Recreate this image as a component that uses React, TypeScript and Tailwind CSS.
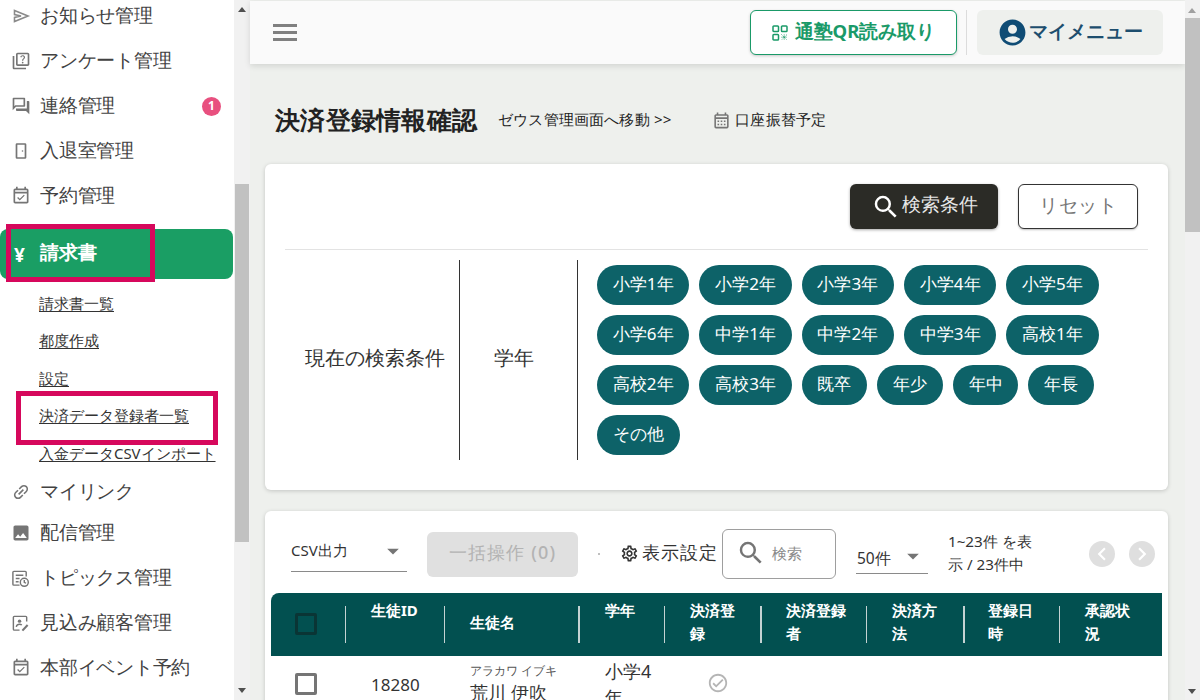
import React from "react";
import { MdOutlineQuiz, MdOutlineForum, MdOutlineEventAvailable, MdImage, MdSearch, MdAccountCircle, MdOutlineSettings, MdChevronLeft, MdChevronRight, MdOutlineCalendarMonth, MdOutlineCheckCircle, MdLink, MdArrowDropDown } from "react-icons/md";

const Send = () => (
  <svg viewBox="0 0 20 20" className="w-5 h-5" fill="none" stroke="#8a8a8a" strokeWidth="1.6">
    <path d="M3.5 4.5 L17 10 L3.5 15.5 L3.5 11.5 L10 10 L3.5 8.5 Z" />
  </svg>
);
const Door = () => (
  <svg viewBox="0 0 20 20" className="w-5 h-5" fill="none" stroke="#757575" strokeWidth="1.7">
    <rect x="5.5" y="3" width="9" height="14" rx="0.5" />
    <circle cx="11.5" cy="10" r="0.8" fill="#757575" stroke="none" />
  </svg>
);
const TopicIcon = () => (
  <svg viewBox="0 0 20 20" className="w-[19px] h-[19px]" fill="none" stroke="#757575" strokeWidth="1.5">
    <path d="M9 17 H3 a1 1 0 0 1 -1 -1 V3.5 a1 1 0 0 1 1 -1 H15 a1 1 0 0 1 1 1 V8" />
    <path d="M5 6.5 H13 M5 10 H9 M5 13.5 H8" />
    <circle cx="14" cy="14" r="4.2" />
    <path d="M14 11.5 V14 L15.8 15" />
  </svg>
);
const ProspectIcon = () => (
  <svg viewBox="0 0 20 20" className="w-[19px] h-[19px]" fill="none" stroke="#757575" strokeWidth="1.5">
    <path d="M16.5 8 V3.5 a1 1 0 0 0 -1 -1 H3.5 a1 1 0 0 0 -1 1 V16 a1 1 0 0 0 1 1 H9" />
    <circle cx="9" cy="7.5" r="1.8" fill="#757575" stroke="none" />
    <path d="M5.5 13.5 c0.5 -2 2 -2.8 3.5 -2.8 c1 0 1.8 .3 2.4 .8" />
    <path d="M12 17.5 L17.5 11.5" strokeWidth="2.2" />
  </svg>
);
const QrIcon = () => (
  <svg viewBox="0 0 16 16" className="w-4 h-4" fill="none" stroke="#1a9a68" strokeWidth="1.5">
    <rect x="1" y="1" width="5.5" height="5.5" rx="0.8" />
    <rect x="9.5" y="1" width="5.5" height="5.5" rx="0.8" />
    <rect x="1" y="9.5" width="5.5" height="5.5" rx="0.8" />
    <path d="M9.5 9.5 L15 15 M15 9.5 L9.5 15 M12.2 9.5 V15 M9.5 12.2 H15" strokeWidth="1" strokeDasharray="1 1" />
  </svg>
);

const iconBox = "w-[40px] pl-[11px] flex items-center shrink-0 text-[#757575]";

function Item({ icon, label, h = "h-[45px]", badge }: { icon: React.ReactNode; label: string; h?: string; badge?: boolean }) {
  return (
    <div className={`${h} flex items-center relative`}>
      <span className={iconBox}>{icon}</span>
      <span className="relative top-[-1px] text-[18.5px] tracking-[-0.25px] text-[#424242] whitespace-nowrap">{label}</span>
      {badge && (
        <span className="absolute left-[202px] top-[13px] w-[19px] h-[19px] rounded-full bg-[#e8507f] text-white text-[12px] font-bold flex items-center justify-center">1</span>
      )}
    </div>
  );
}

function Sub({ label }: { label: string }) {
  return (
    <div className="h-[37.5px] flex items-center pl-[39px]">
      <span className="relative top-[-1px] text-[14.9px] text-[#333] underline underline-offset-2 whitespace-nowrap">{label}</span>
    </div>
  );
}

const chips = ["小学1年", "小学2年", "小学3年", "小学4年", "小学5年", "小学6年", "中学1年", "中学2年", "中学3年", "高校1年", "高校2年", "高校3年", "既卒", "年少", "年中", "年長", "その他"];

const headers = [
  { x: 371, w: 60, y: 599, t: "生徒ID" },
  { x: 470, w: 90, y: 611, t: "生徒名" },
  { x: 605, w: 50, y: 599, t: "学年" },
  { x: 690, w: 46, y: 599, t: "決済登録" },
  { x: 786, w: 62, y: 599, t: "決済登録者" },
  { x: 892, w: 46, y: 599, t: "決済方法" },
  { x: 988, w: 46, y: 599, t: "登録日時" },
  { x: 1085, w: 46, y: 599, t: "承認状況" },
];
const dividers = [
  { x: 345, w: "w-px" }, { x: 444, w: "w-px" }, { x: 578, w: "w-[2px]" }, { x: 664, w: "w-px" },
  { x: 760, w: "w-[2px]" }, { x: 866, w: "w-px" }, { x: 963, w: "w-[2px]" }, { x: 1059, w: "w-px" },
];

export default function App() {
  return (
    <div className="relative w-[1200px] h-[700px] overflow-hidden bg-[#eef0ed] font-['Roboto','Noto_Sans_CJK_JP',sans-serif] text-[#333]">
      {/* Sidebar */}
      <aside className="absolute left-0 top-0 w-[234px] h-[700px] bg-white overflow-hidden">
        <div className="absolute left-0 top-[-6.5px] w-full">
          <Item icon={<Send />} label="お知らせ管理" />
          <Item icon={<MdOutlineQuiz size={20} />} label="アンケート管理" />
          <Item icon={<MdOutlineForum size={20} />} label="連絡管理" badge />
          <Item icon={<Door />} label="入退室管理" />
          <Item icon={<MdOutlineEventAvailable size={20} />} label="予約管理" />
          <div className="mt-[10.5px] h-[50px] w-[233px] rounded-r-lg rounded-l-lg bg-[#1a9e64] flex items-center text-white">
            <span className="relative top-[1px] w-[40px] pl-[14px] font-bold text-[19px]">¥</span>
            <span className="relative top-[-2px] text-[18.7px] font-bold">請求書</span>
          </div>
          <div className="mt-[6px]">
            <Sub label="請求書一覧" />
            <Sub label="都度作成" />
            <Sub label="設定" />
            <Sub label="決済データ登録者一覧" />
            <Sub label="入金データCSVインポート" />
          </div>
          <Item h="h-[38px]" icon={<MdLink size={20} className="-rotate-45" />} label="マイリンク" />
          <Item icon={<MdImage size={20} />} label="配信管理" />
          <Item icon={<TopicIcon />} label="トピックス管理" />
          <Item icon={<ProspectIcon />} label="見込み顧客管理" />
          <Item icon={<MdOutlineEventAvailable size={20} />} label="本部イベント予約" />
        </div>
        <div className="absolute left-[6px] top-[224px] w-[149px] h-[58px] border-[5px] border-[#d6085c]" />
        <div className="absolute left-[16px] top-[391px] w-[202px] h-[54px] border-[5px] border-[#d6085c]" />
      </aside>

      {/* Sidebar scrollbar */}
      <div className="absolute left-[234px] top-0 w-[16px] h-[700px] bg-[#f1f1f1]">
        <div className="absolute left-[1px] top-[184px] w-[14px] h-[358px] bg-[#c1c1c1]" />
        <svg viewBox="0 0 10 6" className="absolute left-[4px] top-[7px] w-[8px] h-[5px]"><path d="M5 0 L10 6 H0 Z" fill="#505050" /></svg>
        <svg viewBox="0 0 10 6" className="absolute left-[4px] top-[688px] w-[8px] h-[5px]"><path d="M0 0 H10 L5 6 Z" fill="#505050" /></svg>
      </div>

      {/* Top bar */}
      <header className="absolute left-[250px] top-[1px] w-[935px] h-[63px] bg-[#fafafa] shadow-[0_2px_6px_rgba(0,0,0,0.12)]">
        <div className="absolute left-[23px] top-[23px] w-[24px] flex flex-col gap-[4px]">
          <span className="h-[3px] bg-[#808080]" />
          <span className="h-[3px] bg-[#808080]" />
          <span className="h-[3px] bg-[#808080]" />
        </div>
        <div className="absolute left-[500px] top-[9px] w-[207px] h-[45px] rounded-md border border-[#1a9a68] bg-white shadow-[0_1px_3px_rgba(0,0,0,0.2)] flex items-center justify-center gap-[7px]">
          <QrIcon />
          <span className="relative top-[-2px] text-[18.5px] font-bold text-[#1a9a68] whitespace-nowrap">通塾QR読み取り</span>
        </div>
        <div className="absolute left-[716px] top-[9px] w-px h-[45px] bg-[#dcdcdc]" />
        <div className="absolute left-[727px] top-[9px] w-[186px] h-[45px] rounded-md bg-[#eef0ed] flex items-center justify-center gap-[1px]">
          <MdAccountCircle size={31} className="text-[#0f4c75]" />
          <span className="relative top-[-2px] text-[18.5px] font-bold text-[#1d4e6e] whitespace-nowrap">マイメニュー</span>
        </div>
      </header>

      {/* Title row */}
      <h1 className="absolute left-[275px] top-[101px] text-[25.2px] leading-[36px] tracking-[0.25px] font-bold text-[#222] whitespace-nowrap">決済登録情報確認</h1>
      <div className="absolute left-[498px] top-[108px] text-[15.2px] tracking-[0.18px] leading-[22px] text-[#222] whitespace-nowrap">ゼウス管理画面へ移動 &gt;&gt;</div>
      <div className="absolute left-[712px] top-[108px] flex items-center gap-[4px] text-[15.2px] tracking-[0.3px] leading-[22px] text-[#222] whitespace-nowrap">
        <MdOutlineCalendarMonth size={19} className="text-[#757575] relative top-[1px]" />
        <span>口座振替予定</span>
      </div>

      {/* Search card */}
      <section className="absolute left-[265px] top-[164px] w-[903px] h-[326px] bg-white rounded-md shadow-[0_1px_4px_rgba(0,0,0,0.18)]">
        <div className="absolute left-[585px] top-[20px] w-[148px] h-[45px] rounded-md bg-[#2b2b26] shadow-[0_1px_3px_rgba(0,0,0,0.35)] flex items-center justify-center gap-[1px] text-white">
          <MdSearch size={30} />
          <span className="relative top-[-2px] text-[18.7px] text-[#e8e8e8] whitespace-nowrap">検索条件</span>
        </div>
        <div className="absolute left-[753px] top-[20px] w-[120px] h-[45px] rounded-md border border-[#333] bg-white shadow-[0_1px_2px_rgba(0,0,0,0.25)] flex items-center justify-center text-[18.5px] text-[#757575] tracking-[0.5px]"><span className="relative top-[-2px]">リセット</span></div>
        <div className="absolute left-[20px] top-[85px] w-[863px] h-px bg-[#e3e3e3]" />
        <div className="absolute left-[40px] top-[180px] text-[20px] leading-[28px] text-[#333] whitespace-nowrap">現在の検索条件</div>
        <div className="absolute left-[194px] top-[96px] w-[1px] h-[200px] bg-[#333]" />
        <div className="absolute left-[229px] top-[180px] text-[20px] leading-[28px] text-[#333]">学年</div>
        <div className="absolute left-[312px] top-[96px] w-[1px] h-[200px] bg-[#333]" />
        <div className="absolute left-[332px] top-[101px] w-[540px] flex flex-wrap gap-[10px]">
          {chips.map((c) => (
            <span key={c} className="h-[40px] px-[15.8px] rounded-[20px] bg-[#0d6268] text-white text-[17px] flex items-center whitespace-nowrap"><span className="relative top-[-1.5px]">{c}</span></span>
          ))}
        </div>
      </section>

      {/* Table card */}
      <section className="absolute left-[265px] top-[511px] w-[903px] h-[200px] bg-white rounded-md shadow-[0_1px_4px_rgba(0,0,0,0.18)]" />

      <div className="absolute left-[291px] top-[539px] text-[15px] leading-[22px] text-[#333] whitespace-nowrap">CSV出力</div>
      <MdArrowDropDown size={28} className="absolute left-[379px] top-[537px] text-[#757575]" />
      <div className="absolute left-[291px] top-[571px] w-[116px] h-px bg-[#8a8a8a]" />
      <div className="absolute left-[427px] top-[532px] w-[151px] h-[45px] rounded-md bg-[#e0e0e0] flex items-center justify-center text-[18px] font-medium text-[#b3b3b3] tracking-[1.2px]"><span className="relative top-[-2px] whitespace-nowrap">一括操作 (0)</span></div>
      <div className="absolute left-[598px] top-[553px] w-[2px] h-[2px] rounded-full bg-[#aaa]" />
      <MdOutlineSettings size={19} className="absolute left-[620px] top-[544px] text-[#333]" />
      <div className="absolute left-[642px] top-[539px] text-[18px] leading-[27px] text-[#333] whitespace-nowrap tracking-[1px]">表示設定</div>
      <div className="absolute left-[722px] top-[529px] w-[114px] h-[50px] rounded-md border border-[#9e9e9e] bg-white" />
      <MdSearch size={30} className="absolute left-[736px] top-[538px] text-[#757575]" />
      <div className="absolute left-[772px] top-[542px] text-[14.5px] leading-[22px] text-[#8a8a8a]">検索</div>
      <div className="absolute left-[857px] top-[547px] text-[15.5px] leading-[22px] text-[#333]">50件</div>
      <MdArrowDropDown size={28} className="absolute left-[899px] top-[542px] text-[#757575]" />
      <div className="absolute left-[856px] top-[573px] w-[72px] h-px bg-[#8a8a8a]" />
      <div className="absolute left-[948px] top-[530px] w-[90px] text-[15.2px] leading-[23px] text-[#333]">1~23件 を表示 / 23件中</div>
      <div className="absolute left-[1089px] top-[541px] w-[26px] h-[26px] rounded-full bg-[#dfdfdf] flex items-center justify-center text-white"><MdChevronLeft size={26} /></div>
      <div className="absolute left-[1129px] top-[541px] w-[26px] h-[26px] rounded-full bg-[#dfdfdf] flex items-center justify-center text-white"><MdChevronRight size={26} /></div>

      {/* Table head */}
      <div className="absolute left-[271px] top-[593px] w-[891px] h-[63px] bg-[#025050] rounded-tl-lg" />
      <div className="absolute left-[295px] top-[613px] w-[22px] h-[22px] rounded-[2px] border-[3px] border-[#0a3535]" />
      {dividers.map((d) => (
        <div key={d.x} className={`absolute top-[606px] h-[37px] ${d.w} bg-[#c4d2d2]`} style={{ left: d.x }} />
      ))}
      {headers.map((h) => (
        <div key={h.x} className="absolute text-[15px] leading-[23px] font-bold text-white break-all" style={{ left: h.x, top: h.y, width: h.w }}>{h.t}</div>
      ))}

      {/* Row */}
      <div className="absolute left-[295px] top-[673px] w-[22px] h-[22px] rounded-[2px] border-[3px] border-[#757575] bg-white" />
      <div className="absolute left-[371px] top-[673px] text-[17px] leading-[24px] text-[#333]">18280</div>
      <div className="absolute left-[470px] top-[662px] text-[11.5px] leading-[18px] text-[#555] whitespace-nowrap">アラカワ イブキ</div>
      <div className="absolute left-[470px] top-[679px] text-[18px] leading-[26px] text-[#333] whitespace-nowrap">荒川 伊吹</div>
      <div className="absolute left-[605px] top-[658px] w-[50px] text-[18px] leading-[26px] text-[#333]">小学4年</div>
      <MdOutlineCheckCircle size={22} className="absolute left-[707px] top-[672px] text-[#b5b5b5]" />

      {/* Main scrollbar */}
      <div className="absolute left-[1185px] top-0 w-[15px] h-[700px] bg-[#f1f1f1]">
        <div className="absolute left-0 top-[18px] w-[15px] h-[214px] bg-[#c1c1c1]" />
        <svg viewBox="0 0 10 6" className="absolute left-[3px] top-[8px] w-[8px] h-[5px]"><path d="M5 0 L10 6 H0 Z" fill="#a0a0a0" /></svg>
        <svg viewBox="0 0 10 6" className="absolute left-[3px] top-[689px] w-[8px] h-[5px]"><path d="M0 0 H10 L5 6 Z" fill="#505050" /></svg>
      </div>
    </div>
  );
}
